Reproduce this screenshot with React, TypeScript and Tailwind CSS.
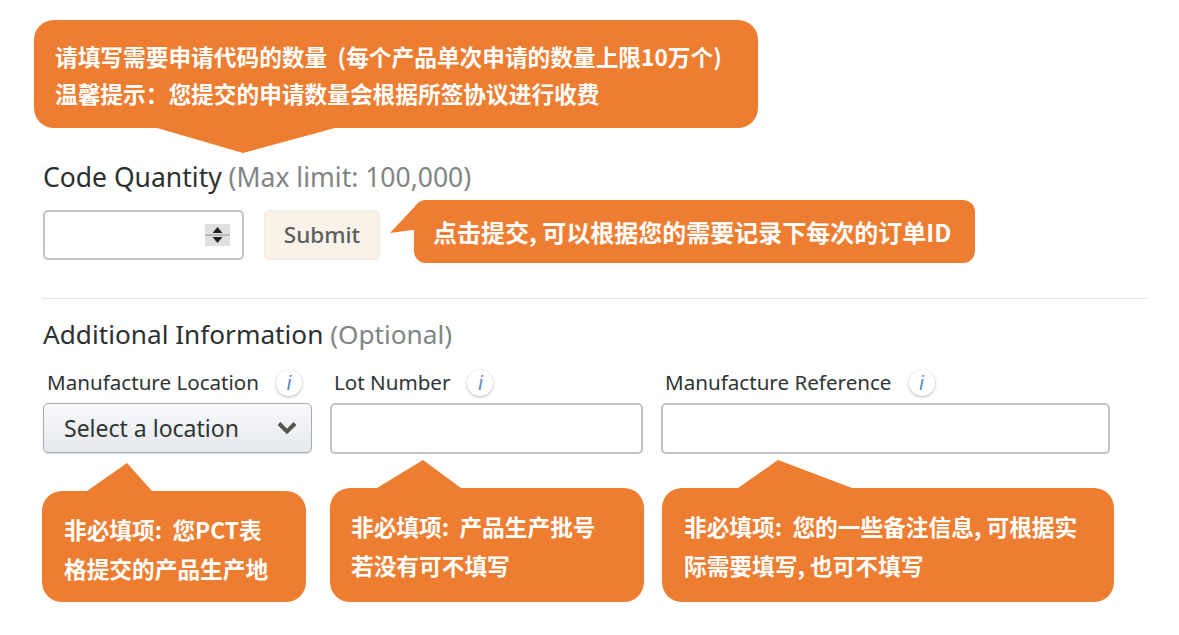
const cjk = "font-['Noto_Sans_CJK_SC',sans-serif]"

function Callout({ className, lines, tail }: { className: string; lines: string[]; tail?: React.ReactNode }) {
  return (
    <div className={`relative bg-[#ed7d31] text-white font-bold rounded-[20px] ${cjk} ${className}`}>
      {tail}
      {lines.map((line) => (
        <div key={line} className="whitespace-pre">
          {line}
        </div>
      ))}
    </div>
  )
}

function UpTail({ left, width, apex }: { left: string; width: number; apex: number }) {
  return (
    <svg className={`absolute bottom-full ${left}`} width={width} height="28" viewBox={`0 0 ${width} 28`}>
      <path d={`M0 28 L${apex} 0 L${width} 28 Z`} fill="#ed7d31" />
    </svg>
  )
}

function InfoIcon() {
  return (
    <span className="flex size-[26px] items-center justify-center rounded-full bg-white shadow-[0_1px_3px_rgba(0,0,0,0.3)] font-['Liberation_Sans',sans-serif] italic text-[20px] text-[#4f8ac4]">
      i
    </span>
  )
}

function FieldLabel({ text }: { text: string }) {
  return (
    <div className="flex h-[36px] items-center gap-[17px] pl-1 text-[20.6px] leading-[34px] text-[#2f3535]">
      <span className="-mt-0.5 whitespace-nowrap">{text}</span>
      <InfoIcon />
    </div>
  )
}

export default function App() {
  return (
    <div className="h-[635px] w-[1179px] overflow-hidden bg-white pt-5 font-['Noto_Sans',sans-serif]">
      <Callout
        className="ml-[34px] h-[108px] w-[724px] pl-[21px] pt-[18px] text-[22.7px] leading-[37px]"
        lines={['请填写需要申请代码的数量  (每个产品单次申请的数量上限10万个)', '温馨提示：您提交的申请数量会根据所签协议进行收费']}
        tail={
          <svg className="absolute left-[123px] top-full" width="178" height="25" viewBox="0 0 178 25">
            <path d="M0 0 L86 25 L178 0 Z" fill="#ed7d31" />
          </svg>
        }
      />

      <div className="ml-[43px] mt-[30px] h-[38px] text-[26.5px] leading-[38px] text-[#2b3030]">
        Code Quantity <span className="text-[#7f8585]">(Max limit: 100,000)</span>
      </div>

      <div className="mt-[4px] flex items-start pl-[43px]">
        <div className="mt-[10px] flex h-[50px] w-[201px] items-center justify-end rounded-[5px] border-2 border-[#c0c3c3] pr-[12px]">
          <svg width="25" height="22" viewBox="0 0 25 22">
            <rect x="0" y="0" width="25" height="22" fill="#dfe1e1" />
            <rect x="0" y="10.5" width="25" height="1" fill="#8d9191" />
            <path d="M12.5 3 L17.5 9 L7.5 9 Z M12.5 19 L17.5 13 L7.5 13 Z" fill="#222" />
          </svg>
        </div>
        <div className="ml-5 mt-[10px] flex h-[50px] w-[116px] items-center justify-center rounded-[5px] border border-[#f1ebe0] bg-[#f8f2e8] text-[22.5px] font-medium text-[#5c5f5f]">
          Submit
        </div>
        <Callout
          className="ml-[34px] h-[63px] w-[561px] !rounded-[12px] pl-[19px] pt-[13px] text-[24px] leading-[37px]"
          lines={['点击提交, 可以根据您的需要记录下每次的订单ID']}
          tail={
            <svg className="absolute -left-[24px] top-px" width="32" height="34" viewBox="0 0 32 34">
              <path d="M30 0 L0 32 L30 28 Z" fill="#ed7d31" />
            </svg>
          }
        />
      </div>

      <div className="ml-[42px] mt-[35px] h-px w-[1106px] bg-[#e4e6e6]" />

      <div className="ml-[43px] mt-[16px] h-[38px] text-[26.2px] leading-[38px] text-[#2b3030]">
        Additional Information <span className="text-[#7f8585]">(Optional)</span>
      </div>

      <div className="mt-[12px] flex items-start pl-[43px]">
        <div className="w-[269px]">
          <FieldLabel text="Manufacture Location" />
          <div className="mt-[2px] flex h-[50px] items-center justify-between rounded-[5px] border border-[#a9acac] bg-gradient-to-b from-[#f8f9fb] to-[#e5e8ec] pl-[20px] pr-[13px] text-[23px] text-[#2f3535] shadow-[0_1px_1px_rgba(0,0,0,0.15)]">
            Select a location
            <svg width="22" height="14" viewBox="0 0 22 14">
              <path d="M3 2.5 L11 10.5 L19 2.5" fill="none" stroke="#555" strokeWidth="4" />
            </svg>
          </div>
          <Callout
            className="-ml-px mt-[38px] h-[111px] w-[264px] pl-[22px] pt-[19px] text-[22.7px] leading-[39px]"
            lines={['非必填项:  您PCT表', '格提交的产品生产地']}
            tail={<UpTail left="left-[45px]" width={65} apex={40} />}
          />
        </div>
        <div className="ml-[18px] w-[313px]">
          <FieldLabel text="Lot Number" />
          <div className="mt-[2px] h-[51px] rounded-[5px] border-2 border-[#c0c3c3]" />
          <Callout
            className="mt-[34px] h-[114px] w-[314px] pl-[21px] pt-[19px] text-[22.7px] leading-[39px]"
            lines={['非必填项:  产品生产批号', '若没有可不填写']}
            tail={<UpTail left="left-[47px]" width={84} apex={46} />}
          />
        </div>
        <div className="ml-[18px] w-[449px]">
          <FieldLabel text="Manufacture Reference" />
          <div className="mt-[2px] h-[51px] rounded-[5px] border-2 border-[#c0c3c3]" />
          <Callout
            className="ml-px mt-[34px] h-[114px] w-[452px] pl-[22px] pt-[19px] text-[22.7px] leading-[39px]"
            lines={['非必填项:  您的一些备注信息, 可根据实', '际需要填写, 也可不填写']}
            tail={<UpTail left="left-[76px]" width={114} apex={40} />}
          />
        </div>
      </div>
    </div>
  )
}
